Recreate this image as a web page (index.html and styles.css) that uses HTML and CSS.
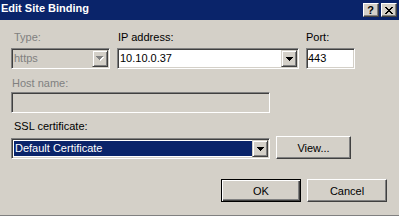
FILE: index.html
```html
<!DOCTYPE html>
<html lang="en">
<head>
    <meta charset="UTF-8">
    <meta name="viewport" content="width=device-width, initial-scale=1.0">
    <title>Edit Site Binding</title>
    <link rel="stylesheet" href="styles.css">
</head>
<body>
    <div class="ventana">
        <div class="barra-titulo">
            <span class="titulo">Edit Site Binding</span>
            <div class="botones-titulo">
                <span class="boton-titulo ayuda">?</span>
                <span class="boton-titulo cerrar">
                    <svg width="8" height="7" viewBox="0 0 8 7" shape-rendering="crispEdges">
                        <rect x="0" y="0" width="2" height="1"/><rect x="6" y="0" width="2" height="1"/>
                        <rect x="1" y="1" width="2" height="1"/><rect x="5" y="1" width="2" height="1"/>
                        <rect x="2" y="2" width="4" height="1"/>
                        <rect x="3" y="3" width="2" height="1"/>
                        <rect x="2" y="4" width="4" height="1"/>
                        <rect x="1" y="5" width="2" height="1"/><rect x="5" y="5" width="2" height="1"/>
                        <rect x="0" y="6" width="2" height="1"/><rect x="6" y="6" width="2" height="1"/>
                    </svg>
                </span>
            </div>
        </div>

        <div class="contenido">
            <div class="fila-uno">
                <div class="campo">
                    <div class="etiqueta deshabilitada sangria">Type:</div>
                    <div class="combo deshabilitado">
                        <span class="combo-texto">https</span>
                        <span class="flecha">
                            <svg width="8" height="5" viewBox="0 0 8 5" shape-rendering="crispEdges">
                                <g fill="#fff" transform="translate(1,1)">
                                    <rect x="0" y="0" width="7" height="1"/><rect x="1" y="1" width="5" height="1"/>
                                    <rect x="2" y="2" width="3" height="1"/><rect x="3" y="3" width="1" height="1"/>
                                </g>
                                <g fill="#808080">
                                    <rect x="0" y="0" width="7" height="1"/><rect x="1" y="1" width="5" height="1"/>
                                    <rect x="2" y="2" width="3" height="1"/><rect x="3" y="3" width="1" height="1"/>
                                </g>
                            </svg>
                        </span>
                    </div>
                </div>
                <div class="campo">
                    <div class="etiqueta">IP address:</div>
                    <div class="combo">
                        <span class="combo-texto">10.10.0.37</span>
                        <span class="flecha">
                            <svg width="7" height="4" viewBox="0 0 7 4" shape-rendering="crispEdges">
                                <rect x="0" y="0" width="7" height="1"/><rect x="1" y="1" width="5" height="1"/>
                                <rect x="2" y="2" width="3" height="1"/><rect x="3" y="3" width="1" height="1"/>
                            </svg>
                        </span>
                    </div>
                </div>
                <div class="campo">
                    <div class="etiqueta sin-sangria">Port:</div>
                    <div class="texto-caja">443</div>
                </div>
            </div>

            <div class="grupo-host">
                <div class="etiqueta deshabilitada">Host name:</div>
                <div class="texto-caja ancha deshabilitado"></div>
            </div>

            <div class="grupo-ssl">
                <div class="etiqueta sangria">SSL certificate:</div>
                <div class="fila-ssl">
                    <div class="combo ancha">
                        <span class="combo-texto seleccionado">Default Certificate</span>
                        <span class="flecha">
                            <svg width="7" height="4" viewBox="0 0 7 4" shape-rendering="crispEdges">
                                <rect x="0" y="0" width="7" height="1"/><rect x="1" y="1" width="5" height="1"/>
                                <rect x="2" y="2" width="3" height="1"/><rect x="3" y="3" width="1" height="1"/>
                            </svg>
                        </span>
                    </div>
                    <button class="boton boton-ver">View...</button>
                </div>
            </div>

            <div class="acciones">
                <button class="boton predeterminado">OK</button>
                <button class="boton">Cancel</button>
            </div>
        </div>
    </div>
</body>
</html>
```

FILE: styles.css
```css
body {
    margin: 0;
    overflow: hidden;
    font-family: "Liberation Sans", Arial, sans-serif;
    font-size: 11px;
}
.ventana {
    width: 399px;
    height: 216px;
    box-sizing: border-box;
    background-color: #d4d0c8;
    border-bottom: 1px solid #808080;
}
.barra-titulo {
    height: 20px;
    background-color: #0a246a;
    display: flex;
    justify-content: space-between;
    align-items: flex-start;
    padding: 0 2px 0 1px;
}
.titulo {
    color: #fff;
    font-weight: bold;
    line-height: 13px;
    padding-top: 2px;
}
.botones-titulo {
    display: flex;
    gap: 2px;
    margin-top: 3px;
}
.boton-titulo {
    width: 16px;
    height: 14px;
    box-sizing: border-box;
    background-color: #d4d0c8;
    border: 1px solid;
    border-color: #fff #404040 #404040 #fff;
    box-shadow: inset -1px -1px #808080;
    display: flex;
    align-items: center;
    justify-content: center;
}
.ayuda {
    font-weight: bold;
    font-size: 11px;
    line-height: 12px;
    padding-right: 1px;
}
.contenido {
    padding: 11px 12px 0 11px;
}
.etiqueta {
    line-height: 13px;
    color: #000;
    padding-left: 1px;
}
.etiqueta.sangria {
    padding-left: 3px;
}
.etiqueta.sin-sangria {
    padding-left: 0;
}
.etiqueta.deshabilitada {
    color: #808080;
}
.fila-uno {
    display: grid;
    grid-template-columns: 99px 182px 49px;
    column-gap: 7px;
}
.fila-uno .etiqueta {
    margin-bottom: 4px;
}
.combo, .texto-caja {
    height: 21px;
    box-sizing: border-box;
    border: 1px solid;
    border-color: #808080 #fff #fff #808080;
    box-shadow: inset 1px 1px #404040, inset -1px -1px #d4d0c8;
    background-color: #fff;
    padding: 1px;
    display: flex;
}
.combo.deshabilitado, .texto-caja.deshabilitado {
    background-color: #d4d0c8;
}
.combo-texto {
    flex: 1;
    line-height: 17px;
    padding-left: 1px;
    white-space: nowrap;
    overflow: hidden;
}
.combo.deshabilitado .combo-texto {
    color: #808080;
}
.combo-texto.seleccionado {
    background-color: #0a246a;
    color: #fff;
    margin: 1px 0 1px 1px;
    line-height: 15px;
}
.flecha {
    width: 16px;
    height: 17px;
    box-sizing: border-box;
    background-color: #d4d0c8;
    border: 1px solid;
    border-color: #d4d0c8 #404040 #404040 #d4d0c8;
    box-shadow: inset 1px 1px #fff, inset -1px -1px #808080;
    display: flex;
    align-items: center;
    justify-content: center;
}
.texto-caja {
    line-height: 17px;
}
.texto-caja.ancha, .combo.ancha {
    width: 259px;
}
.grupo-host {
    margin-top: 8px;
}
.grupo-host .etiqueta {
    margin-bottom: 2px;
}
.grupo-ssl {
    margin-top: 7px;
}
.grupo-ssl .etiqueta {
    margin-bottom: 3px;
}
.fila-ssl {
    display: flex;
    align-items: flex-end;
    gap: 6px;
}
.boton {
    width: 80px;
    height: 23px;
    box-sizing: border-box;
    background-color: #d4d0c8;
    border: 1px solid;
    border-color: #fff #404040 #404040 #fff;
    box-shadow: inset -1px -1px #808080;
    font-family: "Liberation Sans", Arial, sans-serif;
    font-size: 11px;
    color: #000;
    padding: 0;
}
.boton-ver {
    width: 75px;
}
.boton.predeterminado {
    border-color: #000;
    box-shadow: inset 1px 1px #fff, inset -1px -1px #404040, inset -2px -2px #808080;
}
.acciones {
    margin-top: 20px;
    display: flex;
    justify-content: flex-end;
    gap: 6px;
}
```
